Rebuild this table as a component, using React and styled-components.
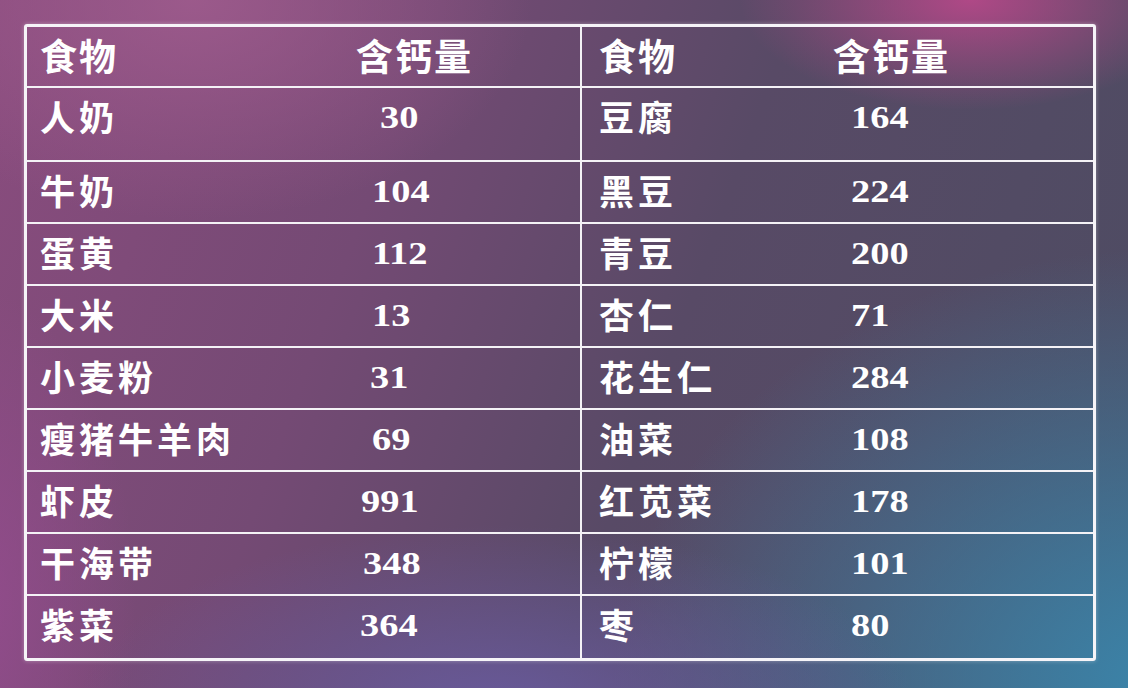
import React from "react"
import styled, { createGlobalStyle } from "styled-components"

const GlobalStyle = createGlobalStyle`
  html, body {
    margin: 0;
    padding: 0;
  }
  body {
    width: 1128px;
    height: 688px;
    overflow: hidden;
  }
`

const Slide = styled.div`
  width: 1128px;
  height: 688px;
  box-sizing: border-box;
  padding: 24px 0 0 24px;
  background:
    radial-gradient(ellipse 230px 110px at 86% 0%, rgba(185, 72, 138, 0.9), rgba(185, 72, 138, 0) 100%),
    radial-gradient(ellipse 340px 220px at 17% 0%, rgba(160, 92, 142, 0.85), rgba(160, 92, 142, 0) 100%),
    radial-gradient(ellipse 420px 190px at 44% 104%, rgba(106, 92, 162, 0.9), rgba(106, 92, 162, 0) 100%),
    radial-gradient(ellipse 170px 320px at -3% 88%, rgba(150, 76, 144, 0.85), rgba(150, 76, 144, 0) 100%),
    radial-gradient(ellipse 560px 440px at 104% 100%, rgba(58, 134, 172, 1), rgba(58, 134, 172, 0) 100%),
    linear-gradient(110deg, #8a4c7e 0%, #744a74 32%, #584a66 58%, #4c4c62 100%);
  font-family: "Noto Sans CJK SC", "Noto Sans", sans-serif;
  color: #fff;
`

const Table = styled.div`
  width: 1072px;
  box-sizing: border-box;
  border: 3px solid #f6f4f8;
  border-radius: 3px;
  box-shadow: 0 0 4px rgba(255, 255, 255, 0.35);
  display: flex;
  flex-direction: column;
`

const Row = styled.div`
  display: grid;
  grid-template-columns: 555px 511px;
  box-sizing: border-box;
  height: ${p => p.$h}px;
  border-bottom: ${p => (p.$last ? "none" : "2px solid #f4f2f6")};
`

const Half = styled.div`
  display: grid;
  grid-template-columns: ${p => p.$split}px 1fr;
  align-items: start;
  padding-left: ${p => p.$pad}px;
  border-right: ${p => (p.$divider ? "2px solid #f4f2f6" : "none")};
  box-sizing: border-box;
`

const Name = styled.div`
  font-size: ${p => (p.$head ? 37 : 35)}px;
  font-weight: 700;
  letter-spacing: ${p => (p.$head ? 2 : 4)}px;
  line-height: 56px;
  white-space: nowrap;
`

const Value = styled.div`
  line-height: 58px;
  white-space: nowrap;
  margin-left: ${p => p.$nudge || 0}px;
`

const Num = styled.span`
  display: inline-block;
  font-family: "Liberation Serif", "Times New Roman", serif;
  font-weight: bold;
  font-size: 32px;
  transform: scaleX(1.2);
  transform-origin: left center;
`

const rows = [
  { a: "人奶", av: "30", an: 8, b: "豆腐", bv: "164", h: 74 },
  { a: "牛奶", av: "104", b: "黑豆", bv: "224" },
  { a: "蛋黄", av: "112", b: "青豆", bv: "200" },
  { a: "大米", av: "13", b: "杏仁", bv: "71" },
  { a: "小麦粉", av: "31", an: -2, b: "花生仁", bv: "284" },
  { a: "瘦猪牛羊肉", av: "69", b: "油菜", bv: "108" },
  { a: "虾皮", av: "991", an: -11, b: "红苋菜", bv: "178" },
  { a: "干海带", av: "348", an: -9, b: "柠檬", bv: "101" },
  { a: "紫菜", av: "364", an: -12, b: "枣", bv: "80" },
]

const App = () => (
  <>
    <GlobalStyle />
    <Slide>
      <Table>
        <Row $h={61}>
          <Half $split={316} $pad={13} $divider>
            <Name $head>食物</Name>
            <Name $head>含钙量</Name>
          </Half>
          <Half $split={234} $pad={17}>
            <Name $head>食物</Name>
            <Name $head>含钙量</Name>
          </Half>
        </Row>
        {rows.map((r, i) => (
          <Row key={r.a} $h={r.h || 62} $last={i === rows.length - 1}>
            <Half $split={332} $pad={13} $divider>
              <Name>{r.a}</Name>
              <Value $nudge={r.an}>
                <Num>{r.av}</Num>
              </Value>
            </Half>
            <Half $split={252} $pad={17}>
              <Name>{r.b}</Name>
              <Value>
                <Num>{r.bv}</Num>
              </Value>
            </Half>
          </Row>
        ))}
      </Table>
    </Slide>
  </>
)

export default App
